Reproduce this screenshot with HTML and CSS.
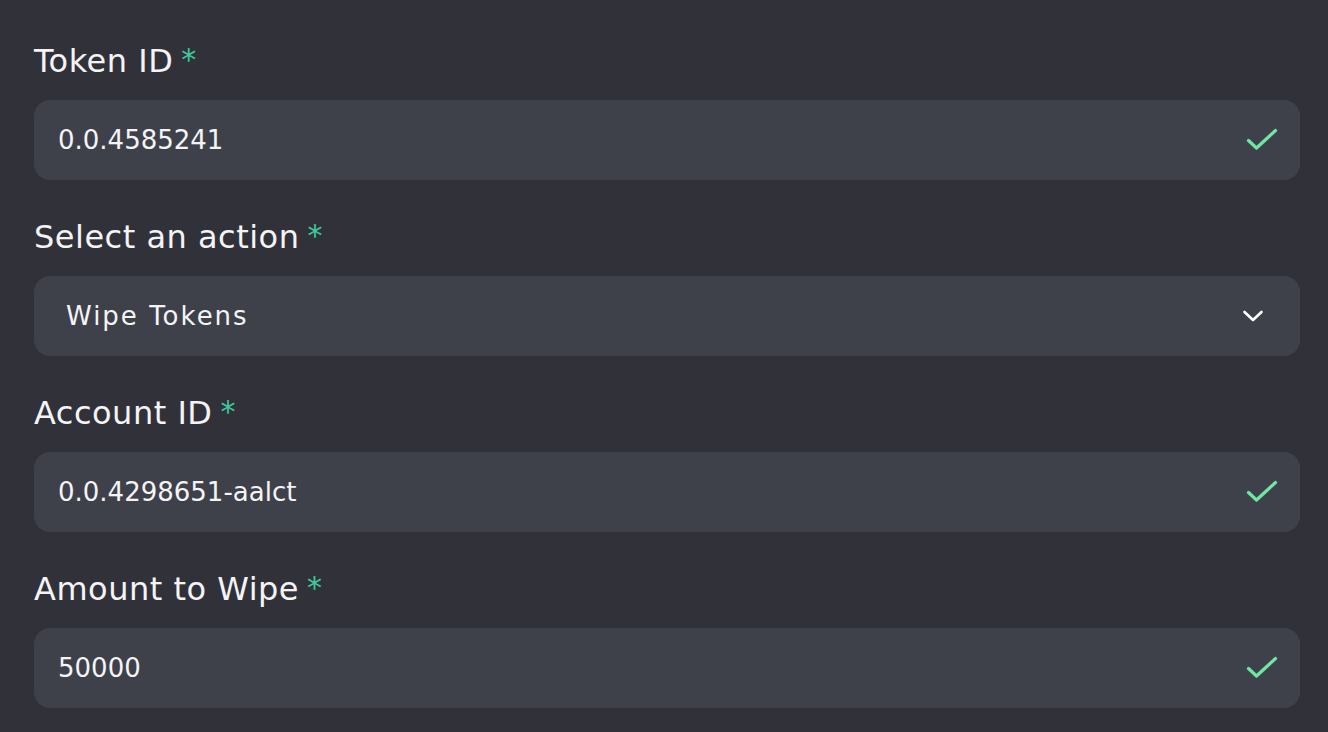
FILE: index.html
```html
<!DOCTYPE html>
<html>
<head>
<meta charset="utf-8">
<link rel="stylesheet" href="styles.css">
</head>
<body>
<form class="form">
  <div class="field">
    <label class="label">Token ID<span class="req">*</span></label>
    <div class="input">
      <span class="value">0.0.4585241</span>
      <svg class="check" width="32" height="24" viewBox="0 0 32 24"><path d="M2.5 12.5 L10.5 20 L29.5 2.5" fill="none" stroke="#6ee7a3" stroke-width="3.2" stroke-linecap="round" stroke-linejoin="round"/></svg>
    </div>
  </div>
  <div class="field">
    <label class="label">Select an action<span class="req">*</span></label>
    <div class="input select">
      <span class="value">Wipe Tokens</span>
      <svg class="chev" width="22" height="14" viewBox="0 0 22 14"><path d="M2.5 3 L11 11 L19.5 3" fill="none" stroke="#ffffff" stroke-width="2.6" stroke-linecap="round" stroke-linejoin="round"/></svg>
    </div>
  </div>
  <div class="field">
    <label class="label">Account ID<span class="req">*</span></label>
    <div class="input">
      <span class="value">0.0.4298651-aalct</span>
      <svg class="check" width="32" height="24" viewBox="0 0 32 24"><path d="M2.5 12.5 L10.5 20 L29.5 2.5" fill="none" stroke="#6ee7a3" stroke-width="3.2" stroke-linecap="round" stroke-linejoin="round"/></svg>
    </div>
  </div>
  <div class="field">
    <label class="label">Amount to Wipe<span class="req">*</span></label>
    <div class="input">
      <span class="value">50000</span>
      <svg class="check" width="32" height="24" viewBox="0 0 32 24"><path d="M2.5 12.5 L10.5 20 L29.5 2.5" fill="none" stroke="#6ee7a3" stroke-width="3.2" stroke-linecap="round" stroke-linejoin="round"/></svg>
    </div>
  </div>
</form>
</body>
</html>
```
FILE: styles.css
```css
html, body {
  margin: 0;
  padding: 0;
  background: #31313a;
}
body {
  font-family: "DejaVu Sans", "Noto Sans", sans-serif;
  color: #f4f4f6;
}
.form {
  padding: 42px 28px 0 34px;
  display: flex;
  flex-direction: column;
  gap: 38px;
}
.field {
  display: flex;
  flex-direction: column;
  gap: 22px;
}
.label {
  font-size: 32px;
  line-height: 36px;
  height: 36px;
  letter-spacing: 0.5px;
  color: #f4f4f6;
}
.req {
  color: #3fc99a;
  font-size: 30px;
  margin-left: 8px;
  vertical-align: 2px;
  letter-spacing: 0;
}
.input {
  height: 80px;
  box-sizing: border-box;
  background: #3f414a;
  border-radius: 16px;
  padding: 0 22px 0 24px;
  display: flex;
  align-items: center;
  justify-content: space-between;
}
.select {
  padding-left: 32px;
  padding-right: 36px;
}
.value {
  font-size: 26px;
  color: #f4f4f6;
}
.select .value {
  letter-spacing: 2px;
}
```
